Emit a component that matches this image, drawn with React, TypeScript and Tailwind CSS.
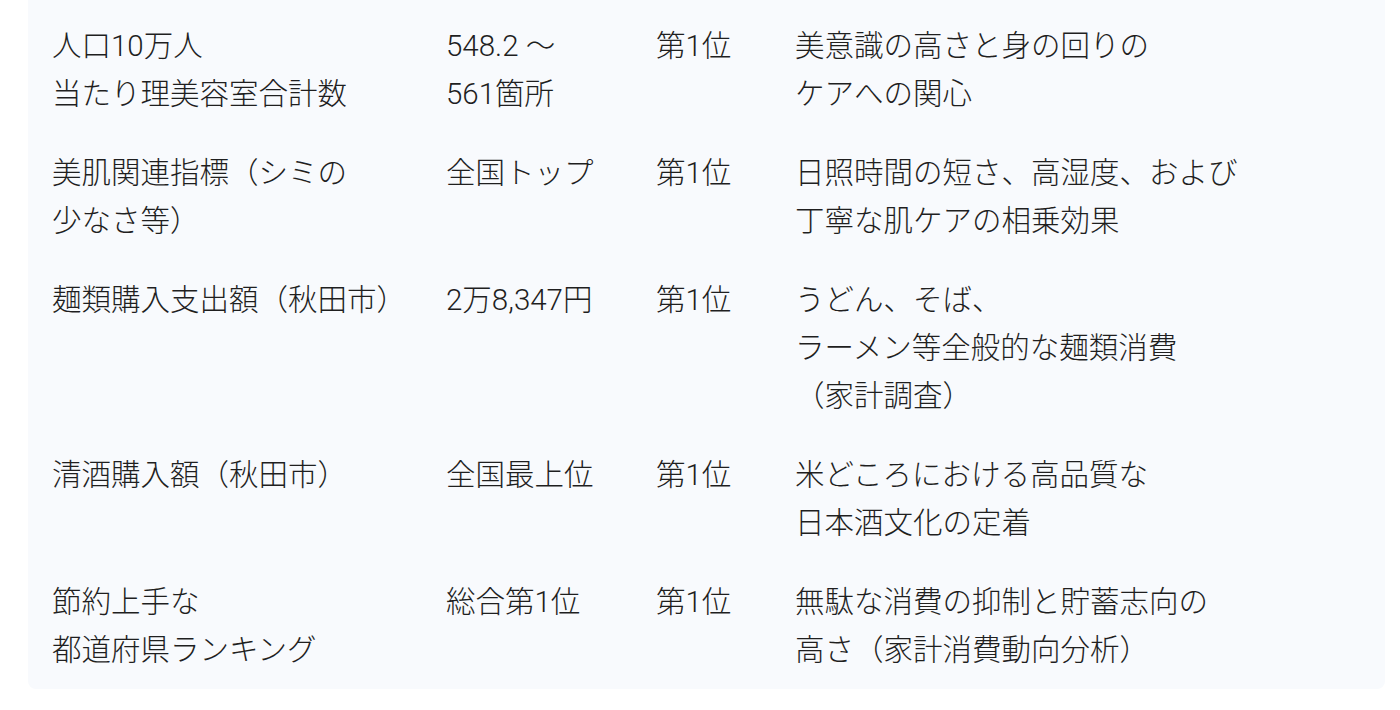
const rows: [string[], string[], string, string[]][] = [
  [["人口10万人", "当たり理美容室合計数"], ["548.2 〜", "561箇所"], "第1位", ["美意識の高さと身の回りの", "ケアへの関心"]],
  [["美肌関連指標（シミの", "少なさ等）"], ["全国トップ"], "第1位", ["日照時間の短さ、高湿度、および", "丁寧な肌ケアの相乗効果"]],
  [["麺類購入支出額（秋田市）"], ["2万8,347円"], "第1位", ["うどん、そば、", "ラーメン等全般的な麺類消費", "（家計調査）"]],
  [["清酒購入額（秋田市）"], ["全国最上位"], "第1位", ["米どころにおける高品質な", "日本酒文化の定着"]],
  [["節約上手な", "都道府県ランキング"], ["総合第1位"], "第1位", ["無駄な消費の抑制と貯蓄志向の", "高さ（家計消費動向分析）"]],
]

function Cell({ lines }: { lines: string[] }) {
  return (
    <div>
      {lines.map((l, i) => (
        <div key={i}>{l}</div>
      ))}
    </div>
  )
}

export default function App() {
  return (
    <div className="w-[1400px] h-[710px] bg-white">
      <div
        className="ml-[28px] w-[1357px] bg-[#f8fafd] rounded-b-lg pl-[24px] pt-[22px] pb-[15px] text-[29.5px] leading-[48px] text-[#1f1f1f] font-light"
        style={{ fontFamily: 'Roboto, "Noto Sans CJK JP", "Noto Sans", sans-serif' }}
      >
        <div className="flex flex-col gap-[31px]">
          {rows.map(([a, b, c, d], i) => (
            <div key={i} className="grid grid-cols-[394px_210px_139px_1fr]">
              <Cell lines={a} />
              <Cell lines={b} />
              <div>{c}</div>
              <Cell lines={d} />
            </div>
          ))}
        </div>
      </div>
    </div>
  )
}
